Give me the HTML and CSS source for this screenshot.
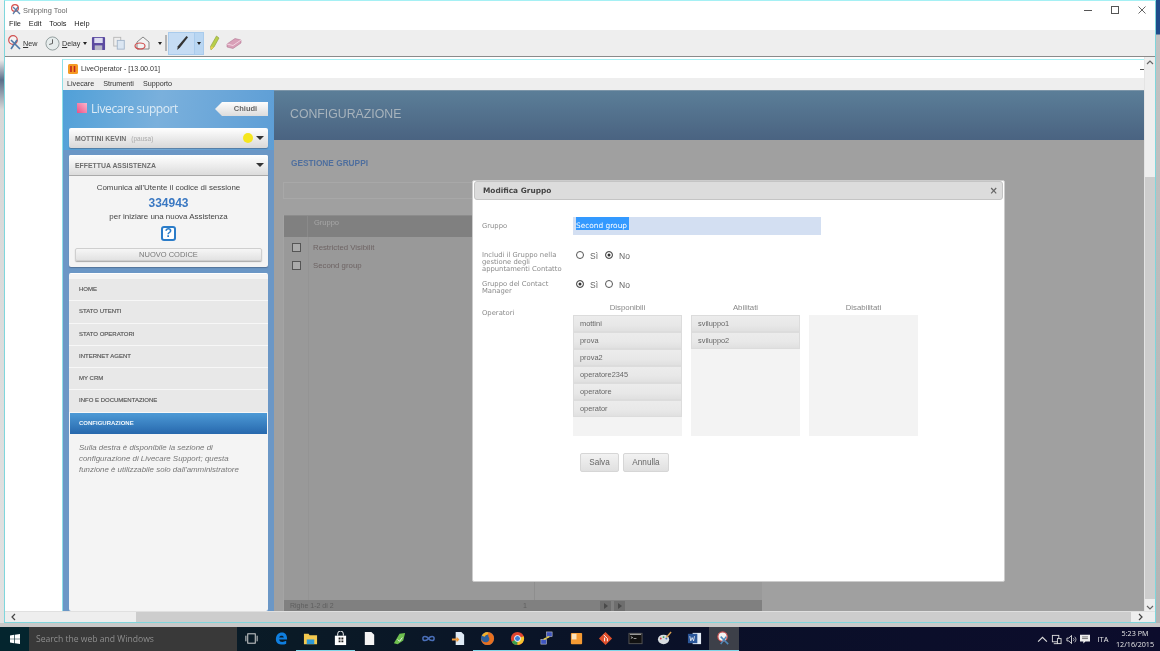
FILE: index.html
```html
<!DOCTYPE html>
<html lang="it">
<head>
<meta charset="utf-8">
<title>Snipping Tool</title>
<link rel="stylesheet" href="styles.css">
</head>
<body>
<div class="desktop">
  <div class="upper">
    <div class="edge-left"></div>
    <div class="window">
      <div class="titlebar">
        <svg class="ico-title" viewBox="0 0 12 12"><circle cx="5" cy="4" r="3.4" fill="#fff" stroke="#d9534f" stroke-width="1.2"/><path d="M3 3l7 7M8 3l-5 7" stroke="#5d7fa8" stroke-width="1.3"/></svg>
        <span class="title-text">Snipping Tool</span>
        <div class="controls">
          <svg viewBox="0 0 10 10" class="ctl"><path d="M1 5.5h8" stroke="#555"/></svg>
          <svg viewBox="0 0 10 10" class="ctl"><rect x="1.5" y="1.5" width="7" height="7" fill="none" stroke="#555"/></svg>
          <svg viewBox="0 0 10 10" class="ctl"><path d="M1.5 1.5l7 7M8.500 1.500l-7 7" stroke="#666"/></svg>
        </div>
      </div>
      <div class="menubar"><span>File</span><span>Edit</span><span>Tools</span><span>Help</span></div>
      <div class="toolbar">
        <svg class="t-ico" viewBox="0 0 16 16"><circle cx="6" cy="5" r="4.300" fill="#f4f4f4" stroke="#d05050" stroke-width="1.200"/><path d="M4 5l9 9M10 5l-6 9" stroke="#4f78a8" stroke-width="1.600"/></svg>
        <span class="t-label t-new"><u>N</u>ew</span>
        <svg class="t-ico t-clock" viewBox="0 0 16 16"><circle cx="8" cy="8" r="7" fill="#e6ecec" stroke="#8e9a9a"/><path d="M8 3.500V8l-3.500 1" fill="none" stroke="#555"/></svg>
        <span class="t-label t-delay"><u>D</u>elay</span>
        <span class="caret c-delay"></span>
        <svg class="t-ico t-save" viewBox="0 0 16 16"><rect x="1" y="1" width="14" height="14" rx="1" fill="#5b4aa0"/><rect x="3.500" y="2" width="9" height="5.500" fill="#dcdcf0"/><rect x="4" y="10" width="8" height="5" fill="#b8b8c8"/></svg>
        <svg class="t-ico t-copy" viewBox="0 0 16 16"><rect x="2" y="1.500" width="8" height="10" fill="#eee" stroke="#b5b5b5"/><rect x="6" y="5" width="8" height="10" fill="#dbe6f2" stroke="#9fb2c8"/></svg>
        <svg class="t-ico t-mail" viewBox="0 0 16 16"><path d="M3 7l6-5 6 5v7H3z" fill="#f2f2f2" stroke="#888"/><ellipse cx="6" cy="11" rx="5" ry="3" fill="none" stroke="#d05050" stroke-width="1.200"/></svg>
        <span class="caret c-mail"></span>
        <span class="t-sep"></span>
        <div class="pen-btn">
          <span class="pen-main"><svg class="t-ico" viewBox="0 0 16 16"><path d="M12.500 1l1.500 1.200L6 12.500 3.200 15l.6-3.800z" fill="#333"/></svg></span>
          <span class="pen-drop"><span class="caret"></span></span>
        </div>
        <svg class="t-ico t-hl" viewBox="0 0 12 16"><path d="M8.500 1l2.500 2-5 9-3 3-.5-3.500z" fill="#b8cf4a" stroke="#8d9a3a" stroke-width=".6"/><path d="M2.500 11.500L6 12l-3 3z" fill="#e8d050"/></svg>
        <svg class="t-ico t-er" viewBox="0 0 16 16"><path d="M1 9l8-5.500 6 1.500v3l-8 5.500-6-1.500z" fill="#d9a0b8" stroke="#a86a88" stroke-width=".5"/><path d="M1 9l6 1.500 8-5.500" fill="none" stroke="#f2d3e0"/></svg>
      </div>
      <div class="canvas">
        <div class="blank"></div>
        <div class="inner">
          <div class="in-title">
            <svg class="lo-ico" viewBox="0 0 10 10"><rect width="10" height="10" rx="1.500" fill="#f59a23"/><path d="M3 2v6M6.500 2v6" stroke="#c4261d" stroke-width="1.600"/></svg>
            <span>LiveOperator - [13.00.01]</span>
            <span class="in-min"></span>
          </div>
          <div class="in-menu"><span>Livecare</span><span>Strumenti</span><span>Supporto</span></div>
          <div class="app">
            <aside class="sidebar">
              <div class="brand">
                <span class="brand-mark"></span>
                <span class="brand-name">Livecare support</span>
                <span class="chiudi">Chiudi</span>
              </div>
              <div class="card user-card">
                <span class="card-head">MOTTINI KEVIN</span><span class="pausa">(pausa)</span>
                <span class="led"></span><span class="tri"></span>
              </div>
              <div class="card assist">
                <div class="assist-head"><span class="card-head">EFFETTUA ASSISTENZA</span><span class="tri"></span></div>
                <p class="a-line a-first">Comunica all'Utente il codice di sessione</p>
                <p class="code">334943</p>
                <p class="a-line">per iniziare una nuova Assistenza</p>
                <div class="help">?</div>
                <div class="new-code">NUOVO CODICE</div>
              </div>
              <nav class="card nav">
                <div class="nav-item">HOME</div>
                <div class="nav-item">STATO UTENTI</div>
                <div class="nav-item">STATO OPERATORI</div>
                <div class="nav-item">INTERNET AGENT</div>
                <div class="nav-item">MY CRM</div>
                <div class="nav-item">INFO E DOCUMENTAZIONE</div>
                <div class="nav-item active">CONFIGURAZIONE</div>
                <p class="nav-note">Sulla destra è disponibile la sezione di configurazione di Livecare Support; questa funzione è utilizzabile solo dall'amministratore</p>
              </nav>
            </aside>
            <main class="main">
              <header class="main-head">CONFIGURAZIONE</header>
              <div class="main-body">
                <h2 class="section">GESTIONE GRUPPI</h2>
                <div class="filter"></div>
                <div class="table">
                  <div class="th"><span class="th-check"></span><span class="th-name">Gruppo</span></div>
                  <div class="tbody">
                    <div class="tr first"><span class="chk"></span><span>Restricted Visibilit</span></div>
                    <div class="tr"><span class="chk"></span><span>Second group</span></div>
                  </div>
                  <div class="tfoot"><span class="rows">Righe 1-2 di 2</span><span class="page">1</span><span class="pg"></span><span class="pg"></span></div>
                </div>
              </div>
              <section class="modal">
                <div class="modal-head"><span>Modifica Gruppo</span><span class="close">×</span></div>
                <div class="form">
                  <div class="f-row r-group"><label class="f-label">Gruppo</label><div class="input"><span class="sel">Second group</span></div></div>
                  <div class="f-row r-inc"><label class="f-label">Includi il Gruppo nella gestione degli appuntamenti Contatto</label>
                    <div class="radios"><span class="radio"></span><span class="r-t">Sì</span><span class="radio on"></span><span class="r-t">No</span></div></div>
                  <div class="f-row r-cm"><label class="f-label">Gruppo del Contact Manager</label>
                    <div class="radios"><span class="radio on"></span><span class="r-t">Sì</span><span class="radio"></span><span class="r-t">No</span></div></div>
                  <div class="f-row r-op"><label class="f-label">Operatori</label>
                    <div class="lists">
                      <div class="col"><h3>Disponibili</h3><div class="list"><div class="li">mottini</div><div class="li">prova</div><div class="li">prova2</div><div class="li">operatore2345</div><div class="li">operatore</div><div class="li">operator</div></div></div>
                      <div class="col"><h3>Abilitati</h3><div class="list"><div class="li">sviluppo1</div><div class="li">sviluppo2</div></div></div>
                      <div class="col"><h3>Disabilitati</h3><div class="list"></div></div>
                    </div>
                  </div>
                  <div class="actions"><button class="btn b-save">Salva</button><button class="btn b-cancel">Annulla</button></div>
                </div>
              </section>
            </main>
          </div>
        </div>
        <div class="vscroll"><svg class="arrow" viewBox="0 0 8 5"><path d="M1 4l3-3 3 3" fill="none" stroke="#666" stroke-width="1.200"/></svg><div class="vthumb"></div><svg class="arrow" viewBox="0 0 8 5"><path d="M1 1l3 3 3-3" fill="none" stroke="#666" stroke-width="1.200"/></svg></div>
      </div>
      <div class="hscroll"><svg class="arrow-h" viewBox="0 0 5 8"><path d="M4 1L1 4l3 3" fill="none" stroke="#444" stroke-width="1.200"/></svg><div class="hthumb"></div><svg class="arrow-h" viewBox="0 0 5 8"><path d="M1 1l3 3-3 3" fill="none" stroke="#444" stroke-width="1.200"/></svg></div>
    </div>
    <div class="edge-right"></div>
  </div>
  <div class="strip"></div>
  <div class="taskbar">
    <div class="start"><svg viewBox="0 0 12 12" class="win"><path d="M0 1.700L5 1v4.600H0zM5.800.9L12 0v5.600H5.800zM0 6.400h5V11l-5-.7zM5.800 6.400H12V12l-6.200-.9z" fill="#fff"/></svg></div>
    <div class="search">Search the web and Windows</div>
    <div class="apps">
      <div class="app-i"><svg viewBox="0 0 16 16"><rect x="4" y="3" width="8" height="10" fill="none" stroke="#ddd"/><path d="M2 5v6M14 5v6" stroke="#ddd"/></svg></div>
      <div class="app-i"><svg viewBox="0 0 16 16"><path d="M2 9c0-5 3-7.500 6.500-7.500S14 4 14 9H5.500c.3 3 4 3.500 7.500 1.500v3c-4 2-11 1-11-4.500zM5.500 6.800h5C10.300 4.500 6 4.500 5.500 6.800z" fill="#0f7fe0"/></svg></div>
      <div class="app-i run"><svg viewBox="0 0 16 16"><path d="M1 3h5l1 1.500h8V14H1z" fill="#f3c94f"/><rect x="4" y="9" width="8" height="5" fill="#2f9ad8"/></svg></div>
      <div class="app-i run"><svg viewBox="0 0 16 16"><path d="M2 5h12v10H2z" fill="#fff"/><path d="M5 5V3a3 3 0 016 0v2" fill="none" stroke="#fff"/><path d="M6 7h2v2H6zM9 7h2v2H9zM6 10h2v2H6zM9 10h2v2H9z" fill="#222"/></svg></div>
      <div class="app-i"><svg viewBox="0 0 16 16"><path d="M3 1h7l3 3v11H3z" fill="#f4f4f4"/></svg></div>
      <div class="app-i"><svg viewBox="0 0 16 16"><path d="M2 13L8 3l6-1-2 8-6 4z" fill="#6fc04f"/><path d="M6 9l2 2 3-4" fill="none" stroke="#eee"/></svg></div>
      <div class="app-i"><svg viewBox="0 0 16 16"><path d="M8 8c-2-3-6-3-6 0s4 3 6 0 6-3 6 0-4 3-6 0z" fill="none" stroke="#4a6fb8" stroke-width="1.600"/></svg></div>
      <div class="app-i"><svg viewBox="0 0 16 16"><path d="M5 1h6l3 3v11H5z" fill="#dfeaf5"/><path d="M1 8h5V6l3 3-3 3v-2H1z" fill="#ef9a3c"/></svg></div>
      <div class="app-i run"><svg viewBox="0 0 16 16"><circle cx="8" cy="8" r="7" fill="#2c5f9e"/><path d="M8 1a7 7 0 11-7 7c1 2 2 4 5 4 4 0 5-4 3-6 0-2-1-4-1-5z" fill="#e8701f"/><path d="M2 5c1-2 3-4 6-4 1 1 1 2 0 3-2 0-2 1-3 2z" fill="#f4b02a"/></svg></div>
      <div class="app-i run"><svg viewBox="0 0 16 16"><circle cx="8" cy="8" r="7" fill="#e0452f"/><path d="M8 8L1.800 11.500A7 7 0 008 15z" fill="#3aa04a"/><path d="M8 8l6.600-2.300A7 7 0 018 15z" fill="#f5c62f"/><circle cx="8" cy="8" r="3.200" fill="#3f7fd8" stroke="#fff"/></svg></div>
      <div class="app-i run"><svg viewBox="0 0 16 16"><rect x="8" y="1" width="6" height="5" fill="#3f56c0" stroke="#ccc" stroke-width=".6"/><rect x="2" y="9" width="6" height="5" fill="#3f56c0" stroke="#ccc" stroke-width=".6"/><path d="M5 9l6-3" stroke="#e8d050" stroke-width="1.500"/></svg></div>
      <div class="app-i run"><svg viewBox="0 0 16 16"><rect x="2" y="2" width="12" height="12" rx="1" fill="#f59a33"/><rect x="3" y="3" width="5" height="6" fill="#fbe2bc"/></svg></div>
      <div class="app-i run"><svg viewBox="0 0 16 16"><path d="M8 1l7 7-7 7-7-7z" fill="#e0502c"/><path d="M6 4l4 4v3M7 7v4" fill="none" stroke="#fff"/></svg></div>
      <div class="app-i run"><svg viewBox="0 0 16 16"><rect x="1" y="2.500" width="14" height="11" fill="#111" stroke="#555"/><path d="M2 3.500h12" stroke="#ccc"/><path d="M3 6l2 1-2 1M6 8h3" stroke="#ddd" stroke-width=".7" fill="none"/></svg></div>
      <div class="app-i run"><svg viewBox="0 0 16 16"><ellipse cx="7" cy="9" rx="6" ry="5" fill="#d8dde0"/><circle cx="4" cy="8" r="1" fill="#d04040"/><circle cx="7" cy="6.500" r="1" fill="#3f9f4f"/><circle cx="10" cy="8" r="1" fill="#3f6fc0"/><path d="M15 1l-5 6" stroke="#d8a050" stroke-width="1.500"/></svg></div>
      <div class="app-i run"><svg viewBox="0 0 16 16"><rect x="6" y="2" width="9" height="12" fill="#e4ecf6"/><rect x="1" y="3" width="10" height="10" fill="#2b579a"/><path d="M3 5.500l1 5 1.500-3.500L7 10.500l1-5" fill="none" stroke="#fff" stroke-width=".8"/></svg></div>
      <div class="app-i run active"><svg viewBox="0 0 16 16"><circle cx="7" cy="6" r="5" fill="#f4f4f4" stroke="#d05050" stroke-width="1.300"/><path d="M5 6l8 8M11 6l-6 8" stroke="#4f88b8" stroke-width="1.600"/></svg></div>
    </div>
    <div class="tray">
      <svg class="tr-i" viewBox="0 0 10 10"><path d="M1 7l4-4 4 4" fill="none" stroke="#ddd"/></svg>
      <svg class="tr-i tr-net" viewBox="0 0 12 12"><rect x="1.500" y="1.500" width="7" height="7" fill="none" stroke="#ddd"/><rect x="7" y="5" width="4" height="5.500" fill="#0c1028" stroke="#ddd"/><path d="M3 10.500h4" stroke="#ddd"/></svg>
      <svg class="tr-i" viewBox="0 0 12 12"><path d="M1 4.500h2l3-3v9l-3-3H1z" fill="none" stroke="#ddd"/><path d="M8 4.500a2 2 0 010 3M9.500 3a4 4 0 010 6" fill="none" stroke="#ddd" stroke-width=".8"/></svg>
      <svg class="tr-i tr-msg" viewBox="0 0 12 12"><path d="M0 1h12v8H6.500L4 11.500V9H0z" fill="#eee"/><path d="M2.500 3.500h7M2.500 5.500h7" stroke="#222" stroke-width=".7"/></svg>
      <span class="lang">ITA</span>
      <div class="clock"><span>5:23 PM</span><span>12/16/2015</span></div>
    </div>
  </div>
</div>
</body>
</html>
```
FILE: styles.css
```css
* { box-sizing: border-box; }
html, body { margin: 0; padding: 0; }
body { width: 1160px; height: 651px; overflow: hidden; font-family: "Liberation Sans", Arial, sans-serif; color: #333; }
p, h2, h3 { margin: 0; font-weight: normal; }
svg { display: block; }

.desktop { width: 1160px; height: 651px; display: flex; flex-direction: column; filter: blur(.35px); background: #ccc; }
.upper { height: 623px; display: flex; }
.edge-left { width: 4px; background: linear-gradient(#f4f4f4 0, #e8e8e8 60px, #5a6f8a 80px, #d8d8d8 110px, #e2e2e2); }
.edge-right { width: 4px; background: linear-gradient(#1f4b8a 0, #1f4b8a 34px, #c2c2c2 35px, #b4b4b4); }
.strip { height: 4px; background: #c9c9c9; }

.window { width: 1152px; border: 1px solid #7fd6dc; border-top-color: #a5f0f4; background: #fff; display: flex; flex-direction: column; }
.titlebar { height: 16px; display: flex; align-items: center; padding-left: 5px; background: #fff; margin-top: 1px; }
.ico-title { width: 12px; height: 12px; margin-right: 1px; }
.title-text { font-size: 7.400px; color: #666; }
.controls { margin-left: auto; display: flex; gap: 17px; padding-right: 8px; }
.ctl { width: 10px; height: 10px; }
.menubar { height: 12px; display: flex; gap: 7.800px; padding-left: 4px; font-size: 7.400px; line-height: 12px; color: #222; }
.toolbar { height: 27px; background: #eee; border-bottom: 1px solid #8a8a8a; display: flex; align-items: center; padding-left: 2px; }
.t-ico { width: 16px; height: 16px; flex: none; }
.t-label { font-size: 7.200px; color: #333; }
.t-new { margin-left: 0; width: 16px; }
.t-clock { margin-left: 6px; width: 15px; height: 15px; }
.t-delay { margin-left: 2px; width: 17px; }
.caret { display: inline-block; width: 0; height: 0; border: 2.500px solid transparent; border-top: 3px solid #222; border-bottom: 0; }
.c-delay { margin-left: 4px; }
.t-save { margin-left: 4px; width: 15px; height: 15px; }
.t-copy { margin-left: 6px; width: 14px; height: 14px; }
.t-mail { margin-left: 8px; }
.c-mail { margin-left: 8px; }
.t-sep { width: 2px; height: 16px; background: #b5b5b5; margin-left: 3px; }
.pen-btn { display: flex; height: 23px; margin-left: 1px; background: #c5dcf4; border: 1px solid #a9cbec; }
.pen-main { width: 25px; display: flex; align-items: center; justify-content: center; }
.pen-drop { width: 9px; border-left: 1px solid #a9cbec; background: #b9d6f2; display: flex; align-items: center; justify-content: center; }
.t-hl { margin-left: 4px; width: 12px; }
.t-er { margin-left: 6px; }

.canvas { flex: 1; display: flex; min-height: 0; }
.blank { width: 57px; background: #fff; }
.inner { width: 1082px; padding-top: 2px; display: flex; flex-direction: column; background: #fff; }
.in-title { height: 19px; border-top: 1px solid #a5f0f4; border-left: 1px solid #8fdfe6; display: flex; align-items: center; padding-left: 5px; font-size: 7.100px; color: #333; }
.lo-ico { width: 10px; height: 10px; margin-right: 3px; }
.in-min { margin-left: auto; width: 4px; height: 1px; background: #555; }
.in-menu { height: 12px; background: #eee; border-left: 1px solid #8fdfe6; display: flex; padding-left: 4px; gap: 9px; font-size: 7.200px; line-height: 12px; color: #333; }
.app { flex: 1; min-height: 0; display: flex; border-left: 1px solid #8fdfe6; }

.sidebar { width: 211px; padding: 0 6px; background: linear-gradient(100deg, #50a0d8 0, #7ab0dc 45%, #5d9ed6 100%) top/100% 60px no-repeat, #6b97c6; overflow: hidden; display: flex; flex-direction: column; }
.brand { height: 38px; flex: none; display: flex; align-items: center; padding-left: 8px; color: #dcebf6; }
.brand-mark { width: 10px; height: 10px; background: linear-gradient(45deg, #ec4f86, #f9b7cd); margin-right: 4px; margin-top: -2px; }
.brand-name { font-size: 12px; font-family: "Open Sans", sans-serif; letter-spacing: -.4px; margin-top: -2px; }
.chiudi { margin-left: auto; width: 53px; height: 14px; background: linear-gradient(#fdfdfd, #dcdcdc); font-size: 7.500px; font-weight: bold; color: #666; text-align: center; line-height: 14px; padding-left: 8px; clip-path: polygon(7px 0, 100% 0, 100% 100%, 7px 100%, 0 50%); }
.card { background: #f4f4f4; border-radius: 2px; }
.user-card { height: 20px; flex: none; display: flex; align-items: center; padding-left: 6px; padding-right: 4px; background: linear-gradient(#fff, #d8d8d8); margin-bottom: 7px; box-shadow: 0 1px 1px rgba(60,80,110,.5); }
.card-head { font-size: 6.900px; font-weight: bold; color: #6e6e6e; }
.pausa { font-size: 6.500px; color: #aaa; margin-left: 5px; }
.led { width: 10px; height: 10px; border-radius: 50%; background: #f5e61e; margin-left: auto; margin-right: 3px; }
.tri { width: 0; height: 0; border: 4px solid transparent; border-top: 4px solid #333; border-bottom: 0; }
.assist { height: 112px; flex: none; margin-bottom: 6px; text-align: center; font-size: 7.950px; color: #444; box-shadow: 0 1px 1px rgba(60,80,110,.5); }
.assist-head { height: 21px; display: flex; justify-content: space-between; align-items: center; padding: 0 4px 0 6px; background: linear-gradient(#fff, #dcdcdc); border-bottom: 1px solid #aaa; border-radius: 2px 2px 0 0; }
.a-line { line-height: 10px; }
.a-first { margin-top: 7px; }
.code { font-size: 12px; font-weight: bold; color: #3a78c2; line-height: 15px; margin: 3px 0 1px; }
.help { width: 15px; height: 15px; margin: 4px auto 0; border-radius: 3px; font-size: 12px; line-height: 15px; font-weight: bold; box-shadow: inset 0 0 0 2px #2b7cc8, inset 0 0 0 9px #fff; color: #2b7cc8; }
.new-code { height: 13px; margin: 7px 6px 0; background: linear-gradient(#f6f6f6, #e2e2e2); border: 1px solid #cfcfcf; border-radius: 2px; font-size: 7.500px; line-height: 12px; color: #777; box-shadow: 0 1px 1px #aaa; }
.nav { flex: 1; padding-top: 5px; border-top: 1px solid #fff; }
.nav-item { height: 22.300px; padding-left: 10px; background: #e8e8e8; border-bottom: 1px solid #f7f7f7; font-size: 6px; line-height: 21.500px; color: #555; -webkit-text-stroke: .15px #555; }
.nav-item.active { background: linear-gradient(#4d9ad6, #2768ad); color: #f2f8fd; font-weight: bold; -webkit-text-stroke: 0; margin: 0 1px; padding-left: 9px; border-bottom: 0; height: 21.500px; }
.nav-note { padding: 8px 10px; font-size: 7.900px; line-height: 11px; font-style: italic; color: #777; }

.main { flex: 1; min-width: 0; position: relative; display: flex; flex-direction: column; background: #a0a0a0; }
.main-head { height: 50px; padding-left: 16px; border-top: 1px solid #7c95a8; background: linear-gradient(#5b7e98, #4a6381); font-size: 12.300px; line-height: 47px; color: #a7b3bc; }
.main-body { flex: 1; min-height: 0; display: flex; flex-direction: column; padding: 0 0 0 9px; }
.section { font-size: 8.300px; font-weight: bold; color: #4f6f9e; padding: 18px 0 0 8px; line-height: 10px; height: 28px; }
.filter { width: 190px; height: 17px; margin-top: 14px; border: 1px solid #a8a8a8; }
.table { flex: 1; width: 479px; margin-top: 16px; display: flex; flex-direction: column; background: #999; border-left: 1px solid #a4a4a4; }
.th { height: 22px; background: #808080; border-top: 1px solid #8c8c8c; display: flex; font-size: 7.500px; color: #a6a6a6; }
.th-check { width: 24px; border-right: 1px solid #8a8a8a; }
.th-name { padding: 2px 0 0 6px; }
.tbody { flex: 1; background: linear-gradient(90deg, transparent 24px, #949494 24px, #949494 25px, transparent 25px, transparent 250px, #8e8e8e 250px, #8e8e8e 251px, transparent 251px); font-size: 7.800px; color: #6e6464; }
.tr { height: 18px; display: flex; align-items: center; }
.tr.first { margin-top: 1px; }
.chk { width: 9px; height: 9px; border: 1px solid #555; background: #aaa; margin: 0 12px 0 8px; }
.tfoot { height: 11px; background: #808080; display: flex; align-items: center; font-size: 7px; color: #5e5e5e; padding-left: 6px; }
.rows { width: 233px; }
.page { width: 77px; }
.pg { width: 11px; height: 10px; background: #6e6e6e; margin-right: 3px; display: flex; align-items: center; justify-content: center; }
.pg::after { content: ""; width: 0; height: 0; border: 3px solid transparent; border-left: 4px solid #4a4a4a; border-right: 0; }

.modal { position: absolute; left: 198px; top: 90px; width: 533px; height: 402px; background: #fff; border: 1px solid #ccc; border-radius: 2px; padding: 0 1px; }
.modal-head { height: 19px; background: #dcdcdc; border: 1px solid #c4c4c4; border-radius: 3px; display: flex; justify-content: space-between; align-items: center; padding: 0 4px 0 8px; font-family: "DejaVu Sans", sans-serif; font-size: 7.400px; font-weight: bold; color: #444; }
.close { font-size: 10px; color: #666; }
.form { padding: 0 0 0 8px; font-family: "DejaVu Sans", sans-serif; }
.f-row { display: flex; }
.f-label { display: block; width: 91px; flex: none; font-size: 6.800px; line-height: 6.800px; color: #8a8a8a; }
.r-group { margin-top: 17px; height: 18px; }
.r-group .f-label { line-height: 19px; }
.input { width: 248px; height: 18px; background: #d3dff2; padding-left: 3px; }
.sel { display: block; width: 53px; height: 13px; background: #3399ff; color: #fff; font-size: 7.400px; line-height: 18px; white-space: nowrap; }
.r-inc { margin-top: 16px; height: 21px; }
.r-inc .f-label { padding-top: 1px; height: 21px; }
.r-cm { margin-top: 8px; height: 14px; }
.r-cm .f-label { padding-top: 1px; }
.radios { display: flex; align-items: flex-start; padding-left: 3px; font-family: "Liberation Sans", sans-serif; font-size: 8.500px; color: #666; }
.radio { width: 8px; height: 8px; border: 1px solid #555; border-radius: 50%; background: #fff; margin-right: 6px; }
.radio.on { background: #333; box-shadow: inset 0 0 0 1.500px #fff; }
.r-t { width: 15px; line-height: 9px; margin-top: 1px; }
.r-op { margin-top: 8px; }
.r-op .f-label { line-height: 22px; }
.lists { display: flex; gap: 9px; }
.col { width: 109px; }
.col h3 { font-family: "Liberation Sans", sans-serif; font-size: 7.800px; text-align: center; color: #888; height: 10px; line-height: 12px; margin-bottom: 3px; }
.list { height: 121px; background: #f3f3f3; }
.li { height: 17px; padding-left: 6px; font-family: "Liberation Sans", sans-serif; font-size: 7.400px; line-height: 15px; color: #666; background: linear-gradient(#ececec 0, #e8e8e8 60%, #e0e0e0 100%); border: 1px solid #dcdcdc; }
.actions { display: flex; gap: 4px; padding: 17px 0 0 98px; }
.btn { height: 19px; padding: 0; background: linear-gradient(#f2f2f2, #e0e0e0); border: 1px solid #d6d6d6; border-radius: 2px; font-family: "Liberation Sans", sans-serif; font-size: 8.200px; color: #666; }
.b-save { width: 39px; }
.b-cancel { width: 46px; }

.vscroll { width: 11px; background: #eee; display: flex; flex-direction: column; border-left: 1px solid #e4e4e4; }
.arrow { width: 8px; height: 5px; margin: 3px auto; flex: none; }
.vthumb { height: 422px; margin-top: 109px; margin-bottom: 3px; background: #cdcdcd; flex: none; }
.hscroll { height: 11px; background: #eee; display: flex; align-items: center; padding-left: 6px; border-top: 1px solid #e0e0e0; }
.arrow-h { width: 5px; height: 8px; flex: none; }
.hthumb { width: 995px; height: 10px; margin-left: 120px; margin-right: 7px; background: #cdcdcd; }

.taskbar { height: 24px; display: flex; background: linear-gradient(90deg, #05212b 0, #0a1a26 25%, #0a1028 60%, #0c0c2c 100%); }
.start { width: 29px; display: flex; align-items: center; justify-content: center; background: #04252e; }
.win { width: 10px; height: 10px; }
.search { width: 208px; background: #393939; color: #8e8e8e; font-family: "Open Sans", sans-serif; font-size: 8.600px; line-height: 24px; padding-left: 7px; }
.apps { display: flex; }
.app-i { width: 29.500px; display: flex; align-items: center; justify-content: center; border-bottom: 1px solid transparent; }
.app-i svg { width: 15px; height: 15px; }
.app-i.run { border-bottom-color: #7fd6e8; }
.app-i.active { background: #3d4049; }
.tray { margin-left: auto; display: flex; align-items: center; color: #e6e6e6; padding-right: 5px; }
.tr-i { width: 11px; height: 11px; margin-right: 3.500px; }
.tr-msg { width: 10px; height: 10px; margin-right: 1px; }
.lang { font-family: "Open Sans", sans-serif; font-size: 7.500px; width: 24px; text-align: center; }
.clock { width: 40px; display: flex; flex-direction: column; align-items: center; font-family: "Open Sans", sans-serif; font-size: 7.200px; line-height: 11px; }
```
